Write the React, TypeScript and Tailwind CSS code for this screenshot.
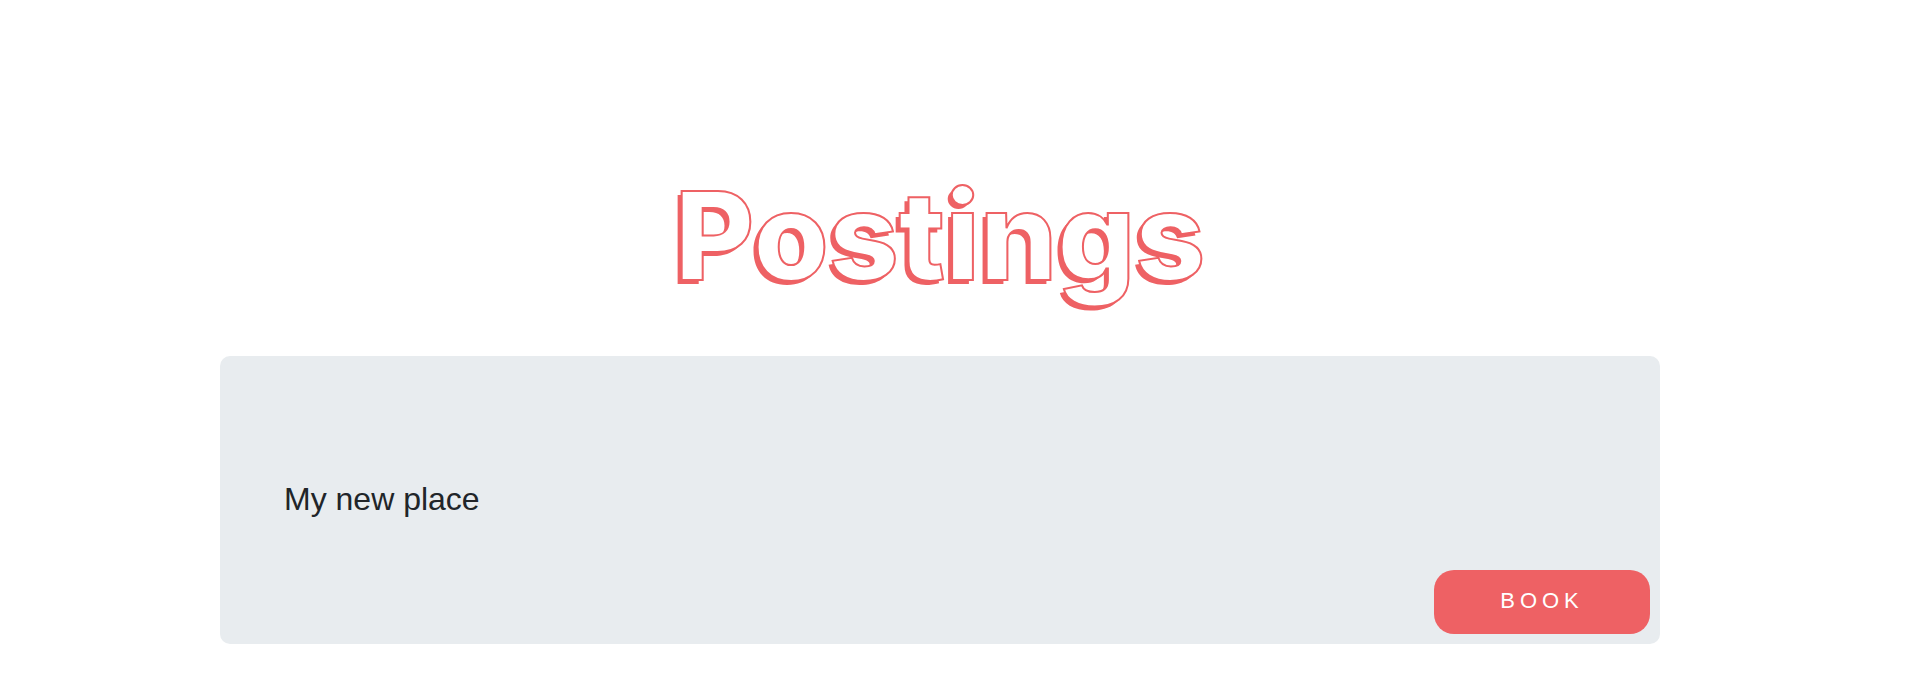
export default function App() {
  return (
    <main className="min-h-screen bg-white px-[220px] pt-[164px] font-['Liberation_Sans',Arial,sans-serif] text-[#212529]">
      <h1 className="pr-[38px] text-center font-['Inter',sans-serif] text-[122px] leading-[144px] font-extrabold text-white [-webkit-text-stroke:2px_#ee6164] [text-shadow:-4px_4px_0_#ee6164]">
        Postings
      </h1>
      <section className="mt-12 mr-[38px] rounded-[10px] bg-[#e8ecef] p-[10px]">
        <h2 className="px-[54px] pt-[113px] text-[32px] leading-10">My new place</h2>
        <div className="mt-[51px] flex justify-end">
          <button type="button" className="h-16 w-[216px] rounded-[20px] bg-[#ee6164] pb-1 text-[22px] tracking-[5px] text-white">
            BOOK
          </button>
        </div>
      </section>
    </main>
  );
}
